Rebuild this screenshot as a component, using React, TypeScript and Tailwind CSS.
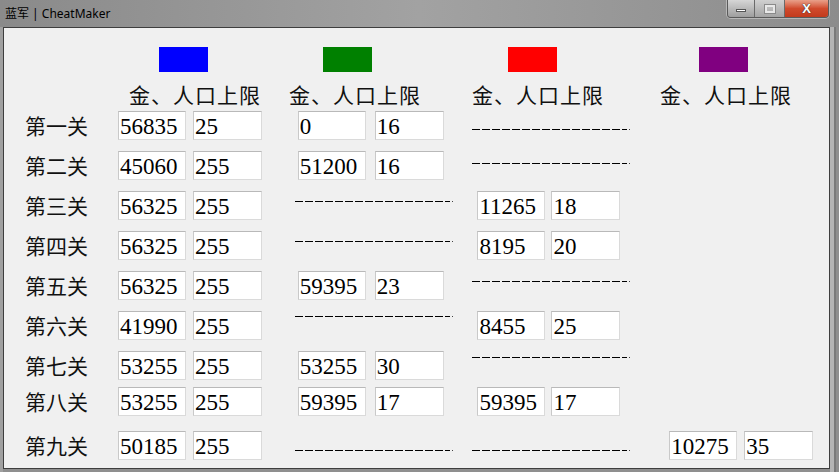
import React from "react";

type Cell = [string, string] | number | null;

const rows: { label: string; mt: string; cells: Cell[] }[] = [
  { label: "第一关", mt: "mt-[6px]", cells: [["56835", "25"], ["0", "16"], 18, null] },
  { label: "第二关", mt: "mt-[11px]", cells: [["45060", "255"], ["51200", "16"], 12, null] },
  { label: "第三关", mt: "mt-[11px]", cells: [["56325", "255"], 10, ["11265", "18"], null] },
  { label: "第四关", mt: "mt-[11px]", cells: [["56325", "255"], 10, ["8195", "20"], null] },
  { label: "第五关", mt: "mt-[11px]", cells: [["56325", "255"], ["59395", "23"], 10, null] },
  { label: "第六关", mt: "mt-[11px]", cells: [["41990", "255"], 5, ["8455", "25"], null] },
  { label: "第七关", mt: "mt-[11px]", cells: [["53255", "255"], ["53255", "30"], 6, null] },
  { label: "第八关", mt: "mt-[7px]", cells: [["53255", "255"], ["59395", "17"], ["59395", "17"], null] },
  { label: "第九关", mt: "mt-[15px]", cells: [["50185", "255"], 19, 19, ["10275", "35"]] },
];

const cellW = ["w-[177px]", "w-[178px]", "w-[197px]", "w-[160px]"];
const inputMl = ["ml-0", "ml-[3px]", "ml-[5px]", "ml-0"];
const inputGap = ["gap-[7px]", "gap-[9px]", "gap-[6px]", "gap-[7px]"];

const dashPt: Record<number, string> = {
  5: "pt-[5px]",
  6: "pt-[6px]",
  10: "pt-[10px]",
  12: "pt-[12px]",
  18: "pt-[18px]",
  19: "pt-[19px]",
};

function Dashes({ pt }: { pt: number }) {
  return (
    <div className={`flex h-full items-start ${dashPt[pt]}`}>
      <div className="flex gap-[2px]">
        {Array.from({ length: 15 }).map((_, i) => (
          <div key={i} className="w-[8px] h-px bg-black" />
        ))}
        <div className="w-[5px] h-px bg-black" />
        <div className="w-px h-px bg-[#444]" />
      </div>
    </div>
  );
}

function Box({ v, w }: { v: string; w: string }) {
  return (
    <div
      className={`${w} h-[29px] bg-white border border-[#dadada] border-t-[#b9b9b9] border-l-[#c9c9c9] flex items-center pl-[1px] pt-[2px] text-[23px] leading-none text-black`}
      style={{ fontFamily: '"Liberation Serif", "Times New Roman", serif' }}
    >
      {v}
    </div>
  );
}

export default function App() {
  const cjk = { fontFamily: '"Noto Sans CJK SC", "Noto Sans", sans-serif' };
  return (
    <div className="w-[839px] h-[472px] relative flex flex-col bg-[#8f8f8f] overflow-hidden">
      {/* title bar */}
      <div className="h-[27px] shrink-0 bg-gradient-to-r from-[#8a8a8a] via-[#a2a2a2] to-[#8c8c8c] flex items-center pl-[5px]">
        <span
          className="text-[12px] leading-none text-black"
          style={{ fontFamily: '"Noto Sans", "Noto Sans CJK SC", sans-serif' }}
        >
          蓝军 | CheatMaker
        </span>
      </div>
      {/* title buttons */}
      <div className="absolute top-0 left-[727px] flex h-[18px] rounded-b-[4px] overflow-hidden border border-t-0 border-[#5a5a5a] shadow-[0_0_0_1px_rgba(255,255,255,0.35)]">
        <div className="w-[27px] h-full bg-gradient-to-b from-[#d6d6d6] to-[#9e9e9e] border-r border-[#6a6a6a] flex items-center justify-center">
          <div className="w-[10px] h-[3px] bg-white border border-[#555] mt-[4px]" />
        </div>
        <div className="w-[30px] h-full bg-gradient-to-b from-[#d0d0d0] to-[#a4a4a4] border-r border-[#6a6a6a] flex items-center justify-center">
          <div className="w-[10px] h-[8px] border-2 border-[#e8e8e8] outline outline-1 outline-[#8a8a8a]" />
        </div>
        <div className="w-[43px] h-full bg-gradient-to-b from-[#e8a08a] via-[#d04a2c] to-[#c23a1c] flex items-center justify-center">
          <span
            className="text-white text-[13px] font-bold leading-none"
            style={{
              fontFamily: '"Liberation Sans", Arial, sans-serif',
              textShadow: "0 0 1px #333, 0 0 1px #333",
            }}
          >
            X
          </span>
        </div>
      </div>
      {/* body */}
      <div className="flex-1 flex">
        <div className="w-[3px] bg-[#a0a0a0]" />
        <div className="w-[827px] h-[442px] border border-[#3e3e3e] bg-[#f0f0f0] flex flex-col">
          {/* swatches */}
          <div className="flex mt-[19px]">
            <div className="ml-[155px] w-[49px] h-[25px] bg-[#0000ff]" />
            <div className="ml-[115px] w-[49px] h-[25px] bg-[#008000]" />
            <div className="ml-[136px] w-[49px] h-[25px] bg-[#ff0000]" />
            <div className="ml-[142px] w-[49px] h-[25px] bg-[#800080]" />
          </div>
          {/* headers */}
          <div className="flex mt-[12px] h-[21px] text-[21px] leading-[21px] text-[#111] tracking-[1px]" style={cjk}>
            <span className="ml-[125px] w-[130px] whitespace-nowrap">金、人口上限</span>
            <span className="ml-[30px] w-[130px] whitespace-nowrap">金、人口上限</span>
            <span className="ml-[53px] w-[130px] whitespace-nowrap">金、人口上限</span>
            <span className="ml-[58px] w-[130px] whitespace-nowrap">金、人口上限</span>
          </div>
          {/* rows */}
          {rows.map((r) => (
            <div key={r.label} className={`flex h-[29px] ${r.mt}`}>
              <div
                className="ml-[21px] w-[93px] flex items-center text-[21px] leading-none text-[#111]"
                style={cjk}
              >
                {r.label}
              </div>
              {r.cells.map((c, i) => (
                <div key={i} className={`${cellW[i]} h-full`}>
                  {Array.isArray(c) ? (
                    <div className={`flex ${inputMl[i]} ${inputGap[i]}`}>
                      <Box v={c[0]} w="w-[68px]" />
                      <Box v={c[1]} w="w-[69px]" />
                    </div>
                  ) : typeof c === "number" ? (
                    <Dashes pt={c} />
                  ) : null}
                </div>
              ))}
            </div>
          ))}
        </div>
        <div className="w-[9px] flex">
          <div className="w-[4px] bg-[#b4b4b4]" />
          <div className="w-[2px] bg-[#7a7a7a]" />
          <div className="w-[3px] bg-[#8e8e8e]" />
        </div>
      </div>
    </div>
  );
}
